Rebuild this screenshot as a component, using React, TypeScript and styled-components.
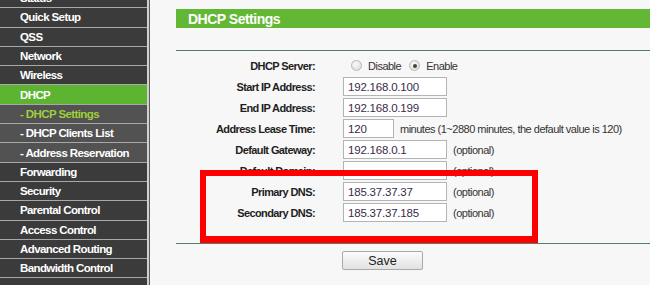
import React from "react";
import styled, { createGlobalStyle } from "styled-components";

const Global = createGlobalStyle`
  html, body { margin: 0; padding: 0; background: #f7f7f7; }
  body { font-family: Arial, "Liberation Sans", sans-serif; overflow: hidden; }
`;

const Page = styled.div`
  display: flex;
  width: 650px;
  height: 285px;
  overflow: hidden;
  background: #f7f7f7;
`;

const SideWrap = styled.div`
  width: 147px;
  flex: none;
  border-right: 2px solid #d0d0d0;
  box-shadow: 1px 0 0 #5a5a5a;
  background: #3b3b3b;
  height: 285px;
  overflow: hidden;
`;

const Menu = styled.div`
  display: flex;
  flex-direction: column;
  margin-top: -11px;
`;

const Item = styled.div<{ $kind?: "main" | "active" | "sub" | "subActive" }>`
  height: 18.3px;
  border-bottom: 1px solid #a8a8a8;
  display: flex;
  align-items: center;
  padding-left: 20px;
  font-size: 11.5px;
  letter-spacing: -0.6px;
  font-weight: bold;
  color: ${(p) => (p.$kind === "subActive" ? "#9fcf3a" : "#ffffff")};
  background: ${(p) =>
    p.$kind === "active"
      ? "#5db431"
      : p.$kind === "sub" || p.$kind === "subActive"
      ? "#525252"
      : "#3b3b3b"};
  white-space: nowrap;
`;

const Main = styled.div`
  position: relative;
  flex: 1;
  padding: 9px 0 0 27px;
`;

const Title = styled.div`
  height: 19px;
  background: #62b834;
  color: #fff;
  font-weight: bold;
  font-size: 14px;
  letter-spacing: -0.5px;
  display: flex;
  align-items: center;
  padding-left: 12px;
`;

const Rule = styled.div<{ $top: number }>`
  margin-top: ${(p) => p.$top}px;
  border-top: 1px solid #4d7f6c;
`;

const Form = styled.div`
  display: flex;
  flex-direction: column;
  padding-top: 4px;
`;

const Row = styled.div`
  display: grid;
  grid-template-columns: 139px auto;
  column-gap: 28px;
  height: 21px;
  align-items: center;
`;

const Label = styled.div`
  text-align: right;
  font-weight: bold;
  font-size: 11px;
  letter-spacing: -0.6px;
  color: #1e1e1e;
  white-space: nowrap;
`;

const Field = styled.div`
  display: flex;
  align-items: center;
  font-size: 11px;
  letter-spacing: -0.5px;
  color: #333;
  white-space: nowrap;
`;

const Input = styled.div<{ $w?: number }>`
  box-sizing: border-box;
  width: ${(p) => p.$w ?? 104}px;
  height: 19px;
  border: 1px solid #b4b4b4;
  background: #fff;
  color: #3b2a48;
  font-size: 11.5px;
  letter-spacing: -0.2px;
  padding-left: 4px;
  display: flex;
  align-items: center;
  margin-right: 6px;
`;

const Radio = styled.span<{ $on?: boolean }>`
  box-sizing: border-box;
  width: 11px;
  height: 11px;
  border-radius: 50%;
  border: 1px solid #b8b8b8;
  background: radial-gradient(circle at 40% 35%, #fafafa, #d6d6d6);
  display: inline-flex;
  align-items: center;
  justify-content: center;
  margin: 0 6px 0 8px;
  &::after {
    content: "";
    width: 4px;
    height: 4px;
    border-radius: 50%;
    background: ${(p) => (p.$on ? "#444" : "transparent")};
  }
`;

const Muted = styled.span`
  color: #333;
`;

const ButtonRow = styled.div`
  display: flex;
  padding: 7px 0 0 166px;
`;

const SaveButton = styled.div`
  box-sizing: border-box;
  width: 81px;
  height: 19px;
  border: 1px solid #a9a9a9;
  border-radius: 2px;
  background: linear-gradient(#fbfbfb, #e2e2e2);
  font-size: 12.5px;
  color: #222;
  display: flex;
  align-items: center;
  justify-content: center;
`;

const Highlight = styled.div`
  position: absolute;
  left: 51px;
  top: 170px;
  width: 338px;
  height: 73px;
  box-sizing: border-box;
  border: 6px solid #ff0000;
  border-bottom-width: 7px;
  pointer-events: none;
`;

const menu: { label: string; kind?: "main" | "active" | "sub" | "subActive" }[] = [
  { label: "Status" },
  { label: "Quick Setup" },
  { label: "QSS" },
  { label: "Network" },
  { label: "Wireless" },
  { label: "DHCP", kind: "active" },
  { label: "- DHCP Settings", kind: "subActive" },
  { label: "- DHCP Clients List", kind: "sub" },
  { label: "- Address Reservation", kind: "sub" },
  { label: "Forwarding" },
  { label: "Security" },
  { label: "Parental Control" },
  { label: "Access Control" },
  { label: "Advanced Routing" },
  { label: "Bandwidth Control" },
  { label: "" },
];

export default function App() {
  return (
    <>
      <Global />
      <Page>
        <SideWrap>
          <Menu>
            {menu.map((m, i) => (
              <Item key={i} $kind={m.kind}>
                {m.label}
              </Item>
            ))}
          </Menu>
        </SideWrap>
        <Main>
          <Title>DHCP Settings</Title>
          <Rule $top={22} />
          <Form>
            <Row>
              <Label>DHCP Server:</Label>
              <Field>
                <Radio />
                Disable
                <Radio $on />
                Enable
              </Field>
            </Row>
            <Row>
              <Label>Start IP Address:</Label>
              <Field>
                <Input>192.168.0.100</Input>
              </Field>
            </Row>
            <Row>
              <Label>End IP Address:</Label>
              <Field>
                <Input>192.168.0.199</Input>
              </Field>
            </Row>
            <Row>
              <Label>Address Lease Time:</Label>
              <Field>
                <Input $w={51}>120</Input>
                <Muted>minutes (1~2880 minutes, the default value is 120)</Muted>
              </Field>
            </Row>
            <Row>
              <Label>Default Gateway:</Label>
              <Field>
                <Input>192.168.0.1</Input>
                <Muted>(optional)</Muted>
              </Field>
            </Row>
            <Row>
              <Label>Default Domain:</Label>
              <Field>
                <Input />
                <Muted>(optional)</Muted>
              </Field>
            </Row>
            <Row>
              <Label>Primary DNS:</Label>
              <Field>
                <Input>185.37.37.37</Input>
                <Muted>(optional)</Muted>
              </Field>
            </Row>
            <Row>
              <Label>Secondary DNS:</Label>
              <Field>
                <Input>185.37.37.185</Input>
                <Muted>(optional)</Muted>
              </Field>
            </Row>
          </Form>
          <Rule $top={20} />
          <ButtonRow>
            <SaveButton>Save</SaveButton>
          </ButtonRow>
          <Highlight />
        </Main>
      </Page>
    </>
  );
}
